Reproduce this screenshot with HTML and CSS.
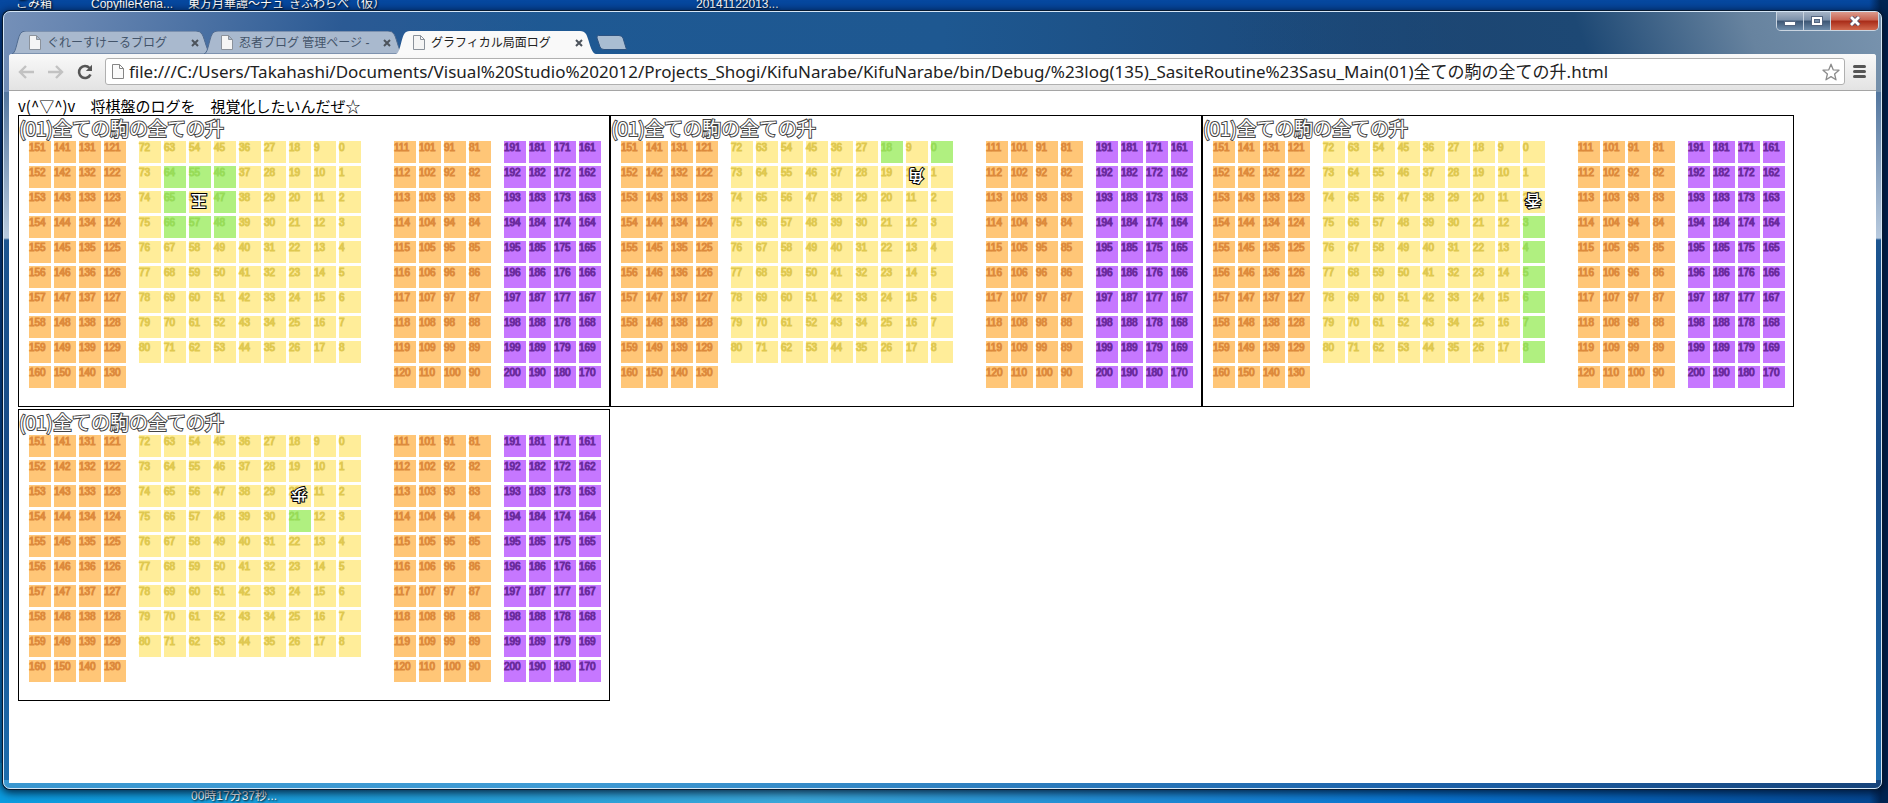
FILE: index.html
```html
<!DOCTYPE html>
<html lang="ja">
<head>
  <meta charset="UTF-8">
  <title>グラフィカル局面ログ</title>
  <link rel="stylesheet" href="styles.css">
</head>
<body>
  <span class="desktop-label label-trash">ごみ箱</span>
  <span class="desktop-label label-copy">CopyfileRena...</span>
  <span class="desktop-label label-touhou">東方月華譚～チュ</span>
  <span class="desktop-label label-kifu">きふわらべ（仮）</span>
  <span class="desktop-label label-date">20141122013...</span>
  <span class="desktop-label label-time">00時17分37秒...</span>

  <div class="window">
    <div class="window-buttons">
      <button class="win-btn" aria-label="最小化"><svg width="12" height="10"><rect x="0.5" y="5.5" width="11" height="4" fill="#fff" stroke="#536580"/></svg></button>
      <button class="win-btn" aria-label="元に戻す"><svg width="12" height="10"><rect x="0.5" y="0.5" width="11" height="9" fill="#fff" stroke="#536580"/><rect x="3.5" y="3.5" width="5" height="3" fill="#7990ac" stroke="#536580"/></svg></button>
      <button class="win-btn win-close" aria-label="閉じる"><svg width="12" height="10"><path d="M2 1L10 9M10 1L2 9" stroke="#55506a" stroke-width="4.5"/><path d="M2 1L10 9M10 1L2 9" stroke="#fff" stroke-width="2.8"/></svg></button>
    </div>

    <div class="tabs">
      <div class="tab">
        <svg class="tab-shape" viewBox="0 0 200 23" preserveAspectRatio="none"><path d="M0 23C5 22 5 4 10 1Q12 0 14 0H184Q188 0 190 3C193 8 195 23 200 23Z"/></svg>
        <svg class="file-icon" width="12" height="15"><path d="M0.5 0.5H7.5L11.5 4.5V14.5H0.5ZM7.5 0.5V4.5H11.5" fill="#f5f5f5" stroke="#8b929b"/></svg>
        <span class="tab-title">ぐれーすけーるブログ</span>
        <button class="tab-close" aria-label="タブを閉じる"><svg width="8" height="8"><path d="M1 1L7 7M7 1L1 7"/></svg></button>
      </div>
      <div class="tab">
        <svg class="tab-shape" viewBox="0 0 200 23" preserveAspectRatio="none"><path d="M0 23C5 22 5 4 10 1Q12 0 14 0H184Q188 0 190 3C193 8 195 23 200 23Z"/></svg>
        <svg class="file-icon" width="12" height="15"><path d="M0.5 0.5H7.5L11.5 4.5V14.5H0.5ZM7.5 0.5V4.5H11.5" fill="#f5f5f5" stroke="#8b929b"/></svg>
        <span class="tab-title">忍者ブログ 管理ページ -</span>
        <button class="tab-close" aria-label="タブを閉じる"><svg width="8" height="8"><path d="M1 1L7 7M7 1L1 7"/></svg></button>
      </div>
      <div class="tab active">
        <svg class="tab-shape" viewBox="0 0 200 23" preserveAspectRatio="none"><path d="M0 23C5 22 5 4 10 1Q12 0 14 0H184Q188 0 190 3C193 8 195 23 200 23Z"/></svg>
        <svg class="file-icon" width="12" height="15"><path d="M0.5 0.5H7.5L11.5 4.5V14.5H0.5ZM7.5 0.5V4.5H11.5" fill="#f5f5f5" stroke="#8b929b"/></svg>
        <span class="tab-title">グラフィカル局面ログ</span>
        <button class="tab-close" aria-label="タブを閉じる"><svg width="8" height="8"><path d="M1 1L7 7M7 1L1 7"/></svg></button>
      </div>
      <button class="new-tab" aria-label="新しいタブ"><svg width="32" height="16"><path d="M2.5 0.5H23Q26 0.5 27 3L30.5 14.5H8Q5 14.5 4 12L1 3Q0.5 0.5 2.5 0.5Z" fill="#a9bdd2" stroke="#2d5382"/></svg></button>
    </div>

    <div class="browser">
      <div class="toolbar">
        <button class="tool back" aria-label="戻る"><svg width="17" height="16"><path d="M16 8H3M8 2L2 8L8 14" fill="none" stroke="#c2c2c2" stroke-width="2.4"/></svg></button>
        <button class="tool forward" aria-label="進む"><svg width="17" height="16"><path d="M1 8H14M9 2L15 8L9 14" fill="none" stroke="#c2c2c2" stroke-width="2.4"/></svg></button>
        <button class="tool reload" aria-label="再読み込み"><svg width="16" height="16"><path d="M12.5 4A6 6 0 1 0 13.5 10.5" fill="none" stroke="#555" stroke-width="2.6"/><path d="M15 0.8V7H8.8Z" fill="#555"/></svg></button>
        <div class="omnibox">
          <svg class="file-icon" width="12" height="15"><path d="M0.5 0.5H7.5L11.5 4.5V14.5H0.5ZM7.5 0.5V4.5H11.5" fill="#fafafa" stroke="#858585"/></svg>
          <input class="address" type="text" aria-label="アドレス" value="file:///C:/Users/Takahashi/Documents/Visual%20Studio%202012/Projects_Shogi/KifuNarabe/KifuNarabe/bin/Debug/%23log(135)_SasiteRoutine%23Sasu_Main(01)全ての駒の全ての升.html">
          <button class="star" aria-label="ブックマーク"><svg width="18" height="18"><path d="M9 1.2L11.2 6.8L17 7.2L12.6 11L14 16.8L9 13.6L4 16.8L5.4 11L1 7.2L6.8 6.8Z" fill="#fff" stroke="#8c8c8c" stroke-width="1.3" stroke-linejoin="round"/></svg></button>
        </div>
        <button class="tool menu" aria-label="メニュー"><svg width="13" height="13"><path d="M1.5 1.5H11.5M1.5 6.5H11.5M1.5 11.5H11.5" stroke="#555" stroke-width="3" stroke-linecap="round"/></svg></button>
      </div>
      <div class="page">
        <p class="intro">v(^▽^)v　将棋盤のログを　視覚化したいんだぜ☆</p>
        <div class="boards" id="boards"></div>
      </div>
    </div>
  </div>
  <script src="script.js"></script>
</body>
</html>
```
FILE: styles.css
```css
* {
  box-sizing: border-box;
}

body {
  margin: 0;
  height: 100vh;
  padding: 11px 6px 14px 3px;
  overflow: hidden;
  position: relative;
  font-family: "Liberation Sans", "Noto Sans CJK JP", sans-serif;
  background:
    linear-gradient(to right, transparent 99%, #012452 99.6%),
    linear-gradient(to right, #0a9ce0, #28a0d8 28%, #3ba8da 42%, #0874d0 75%, #04458f) bottom / 100% 40px no-repeat,
    linear-gradient(to bottom, #0648a0, #063a80 20%, #034a9c 50%, #0788d8);
}

button {
  border: 0;
  padding: 0;
  background: none;
  display: flex;
  align-items: center;
  justify-content: center;
}

.desktop-label {
  position: absolute;
  top: -5px;
  font-size: 12px;
  line-height: 18px;
  color: #fff;
  white-space: nowrap;
  text-shadow: 1px 1px 2px #000;
}

.label-trash {
  left: 16px;
}

.label-copy {
  left: 91px;
}

.label-touhou {
  left: 188px;
}

.label-kifu {
  left: 289px;
}

.label-date {
  left: 696px;
}

.label-time {
  left: 191px;
  top: auto;
  bottom: -2px;
}

.window {
  position: relative;
  height: 100%;
  display: flex;
  flex-direction: column;
  padding: 19px 5px 5px 5px;
  border: 1px solid #d5e6f6;
  border-radius: 7px;
  box-shadow: 0 0 0 1px #071a30, 0 2px 8px 2px rgba(0, 10, 30, 0.8);
  background:
    linear-gradient(105deg, #7590b8, #6584b0 80px, #2b5a94 330px, transparent 520px) top / 100% 80px no-repeat,
    linear-gradient(250deg, #7893ae, #67839f 130px, #1d4874 290px, transparent 620px) top / 100% 80px no-repeat,
    linear-gradient(to right, #1f5a96, #1e5891 50%, #1a4270 80%) top / 100% 80px no-repeat,
    linear-gradient(to right, #3a97d0, #3f9bd4 30%, #1c62aa 75%, #16437a) bottom / 100% 8px no-repeat,
    linear-gradient(to bottom, #5c80ac, #54779f 80px, #b8cade 226px, #1c5590 228px, #174a86 60%, #1c6cad);
}

.window-buttons {
  position: absolute;
  top: 0;
  right: 2px;
  display: flex;
  height: 19px;
  border: 1px solid #c9d4e0;
  border-top: 0;
  border-radius: 0 0 5px 5px;
  overflow: hidden;
}

.win-btn {
  width: 27px;
  border-right: 1px solid #c9d4e0;
  background: linear-gradient(#a5b4c6, #7b90aa 45%, #3c5674 50%, #6e8caa);
}

.win-close {
  width: 47px;
  border: 0;
  background: linear-gradient(#dc9b8d, #c8624f 45%, #a82b18 50%, #d2694e);
}

.tabs {
  display: flex;
  height: 23px;
  padding-left: 3px;
}

.tab {
  position: relative;
  width: 200px;
  margin-right: -8px;
  display: flex;
  align-items: center;
  padding: 0 13px 0 17px;
  color: #43546a;
}

.tab-shape {
  position: absolute;
  left: 0;
  top: 0;
  width: 100%;
  height: 100%;
  fill: #a9b9ce;
  stroke: #506b90;
  stroke-width: 1px;
}

.active {
  color: #222;
  z-index: 1;
}

.active .tab-shape {
  fill: #f9f9f9;
  stroke: none;
}

.file-icon {
  position: relative;
  flex: none;
}

.tab-title {
  position: relative;
  flex: 1;
  margin-left: 6px;
  font-size: 12px;
  line-height: 20px;
  white-space: nowrap;
  overflow: hidden;
}

.tab-close {
  position: relative;
}

.tab-close path {
  stroke: #4c535c;
  stroke-width: 2px;
}

.new-tab {
  margin: 4px 0 0 8px;
  height: 16px;
}

.browser {
  flex: 1;
  min-height: 0;
  display: flex;
  flex-direction: column;
  border-radius: 3px 3px 0 0;
  background: #fff;
}

.toolbar {
  display: flex;
  align-items: center;
  height: 37px;
  padding: 4px 8px 5px 9px;
  border-bottom: 1px solid #a5a5a5;
  border-radius: 3px 3px 0 0;
  background: linear-gradient(#f9f9f9, #e3e3e3);
}

.tool {
  width: 17px;
  margin-right: 12px;
}

.omnibox {
  flex: 1;
  display: flex;
  align-items: center;
  height: 27px;
  padding: 0 4px 0 6px;
  border: 1px solid #b0b0b0;
  border-radius: 3px;
  background: #fff;
}

.address {
  flex: 1;
  min-width: 0;
  height: 24px;
  padding: 0 0 2px;
  margin-left: 5px;
  border: 0;
  outline: 0;
  background: none;
  color: #222;
  font: 17px "Noto Sans", "Noto Sans CJK JP", sans-serif;
}

.menu {
  width: 13px;
  margin: 0 2px 0 8px;
}

.page {
  flex: 1;
  min-height: 0;
  padding: 6px 9px;
  overflow: hidden;
}

.intro {
  margin: 0;
  height: 18px;
  font-family: "Noto Sans CJK JP", sans-serif;
  font-size: 15px;
  line-height: 17px;
  color: #000;
}

.boards {
  display: flex;
  flex-wrap: wrap;
  row-gap: 2px;
}

.board {
  width: 592px;
  height: 292px;
  border: 1px solid #000;
}

.board-title {
  margin: 0;
  height: 25px;
  font-family: "Noto Sans CJK JP", sans-serif;
  font-size: 19px;
  font-weight: 400;
  line-height: 23px;
  color: #fff;
  -webkit-text-stroke: 2px #444;
  paint-order: stroke fill;
}

.zones {
  display: flex;
  align-items: flex-start;
  gap: 13px;
  padding-left: 10px;
}

.zone {
  display: grid;
  grid-auto-flow: column;
  grid-auto-columns: 22px;
  gap: 3px;
}

.stand {
  grid-template-rows: repeat(10, 22px);
}

.field {
  grid-template-rows: repeat(9, 22px);
  margin-right: 20px;
}

.cell {
  position: relative;
  font-size: 10px;
  line-height: 14px;
  -webkit-text-stroke: 1px;
}

.stand .cell {
  background: #ffc677;
  color: #dd8a3c;
}

.field .cell {
  background: #ffed99;
  color: #dfc850;
}

.box .cell {
  background: #c677ff;
  color: #6a2b9d;
}

.field .reach {
  background: #b0f080;
  color: #98dc58;
}

.piece {
  position: absolute;
  left: 1px;
  top: 2px;
  width: 18px;
  font-family: "Noto Sans CJK JP", sans-serif;
  font-size: 16px;
  font-weight: 500;
  line-height: 18px;
  text-align: center;
  color: #fff;
  -webkit-text-stroke: 2px #000;
  paint-order: stroke fill;
  transform: rotate(180deg);
}
```
FILE: script.js
```javascript
const boards = [
  { piece: '玉', at: 56, reach: [64, 55, 46, 65, 47, 66, 57, 48] },
  { piece: '角', at: 10, reach: [18, 0] },
  { piece: '香', at: 2, reach: [3, 4, 5, 6, 7, 8] },
  { piece: '歩', at: 20, reach: [21] }
];

// first = number in the top left square, columns count down to the right
const zones = [
  { first: 151, cols: 4, rows: 10, name: 'stand' },
  { first: 72, cols: 9, rows: 9, name: 'field' },
  { first: 111, cols: 4, rows: 10, name: 'stand' },
  { first: 191, cols: 4, rows: 10, name: 'stand box' }
];

function makeZone(zone, board) {
  let cells = '';
  for (let col = 0; col < zone.cols; col++) {
    for (let row = 0; row < zone.rows; row++) {
      const n = zone.first - col * zone.rows + row;
      const reach = board.reach.includes(n) ? ' reach' : '';
      const piece = n === board.at ? `<span class="piece">${board.piece}</span>` : '';
      cells += `<div class="cell${reach}">${n}${piece}</div>`;
    }
  }
  return `<div class="zone ${zone.name}">${cells}</div>`;
}

document.getElementById('boards').innerHTML = boards.map(board => `
  <section class="board">
    <h2 class="board-title">(01)全ての駒の全ての升</h2>
    <div class="zones">${zones.map(zone => makeZone(zone, board)).join('')}</div>
  </section>`).join('');
```
